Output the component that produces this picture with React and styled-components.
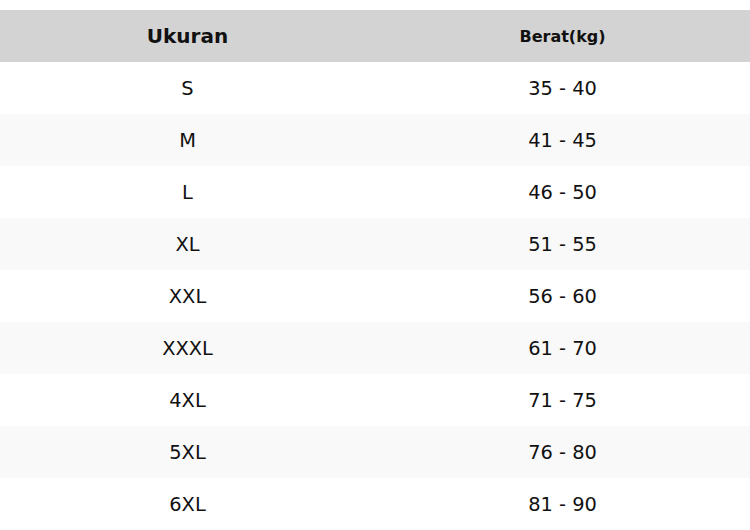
import React from 'react'
import styled, { createGlobalStyle } from 'styled-components'

const GlobalStyle = createGlobalStyle`
  body {
    margin: 0;
    background: #fff;
    font-family: "DejaVu Sans", Verdana, sans-serif;
  }
`

const Table = styled.table`
  width: 750px;
  margin-top: 10px;
  border-collapse: collapse;
  table-layout: fixed;
  color: #111;
`

const HeadCell = styled.th`
  height: 52px;
  padding: 0;
  background: #d3d3d3;
  font-weight: bold;
  font-size: ${p => p.$size}px;
  text-align: center;
`

const Row = styled.tr`
  background: ${p => (p.$striped ? '#f9f9f9' : '#fff')};
`

const Cell = styled.td`
  height: 52px;
  padding: 0;
  font-size: 19.4px;
  text-align: center;
`

const sizes = [
  ['S', '35 - 40'],
  ['M', '41 - 45'],
  ['L', '46 - 50'],
  ['XL', '51 - 55'],
  ['XXL', '56 - 60'],
  ['XXXL', '61 - 70'],
  ['4XL', '71 - 75'],
  ['5XL', '76 - 80'],
  ['6XL', '81 - 90'],
]

export default function App() {
  return (
    <>
      <GlobalStyle />
      <Table>
        <thead>
          <tr>
            <HeadCell $size={20}>Ukuran</HeadCell>
            <HeadCell $size={16}>Berat(kg)</HeadCell>
          </tr>
        </thead>
        <tbody>
          {sizes.map(([size, weight], i) => (
            <Row key={size} $striped={i % 2 === 1}>
              <Cell>{size}</Cell>
              <Cell>{weight}</Cell>
            </Row>
          ))}
        </tbody>
      </Table>
    </>
  )
}
